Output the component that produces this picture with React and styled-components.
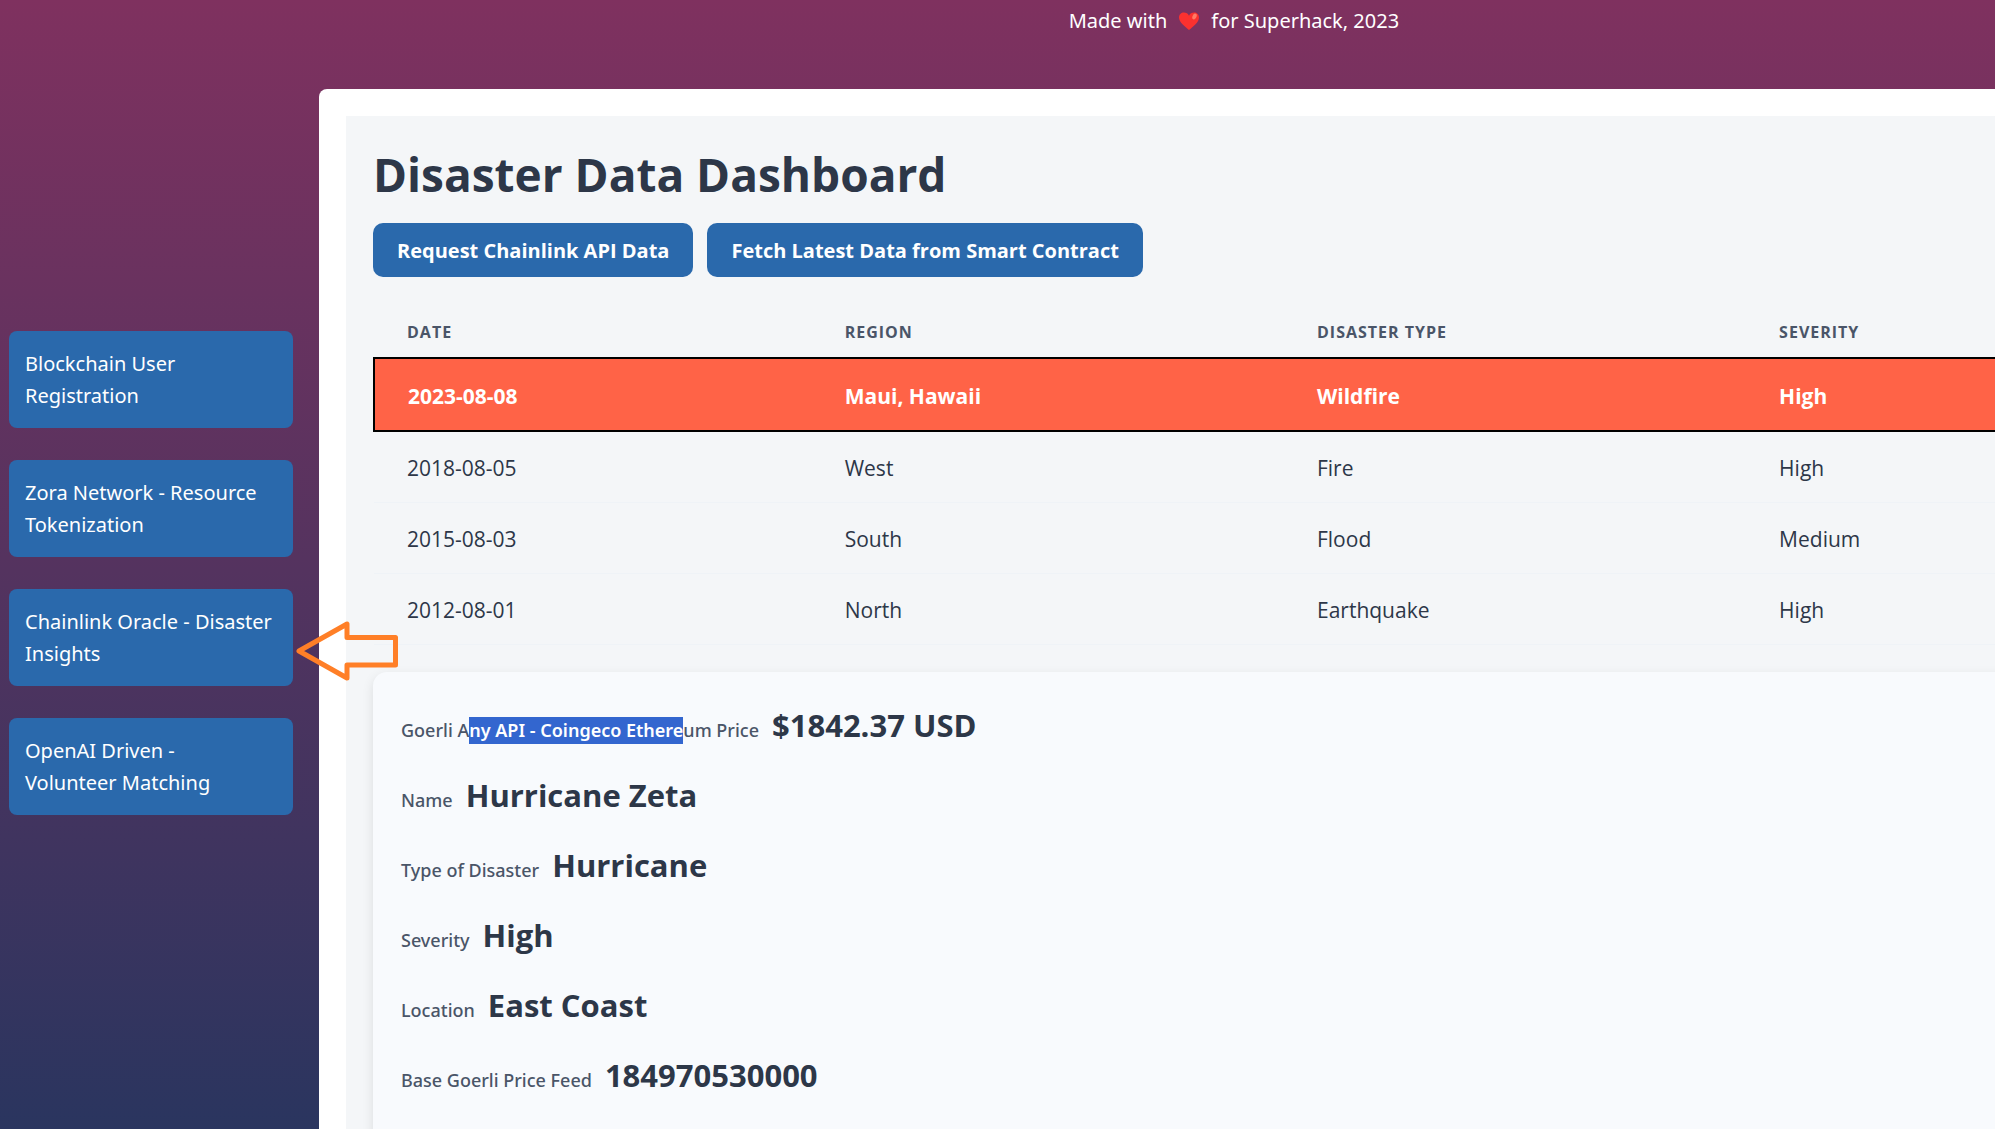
import React from 'react';
import styled, { createGlobalStyle } from 'styled-components';

const GlobalStyle = createGlobalStyle`
  * {
    box-sizing: border-box;
  }
  body {
    margin: 0;
    font-family: 'Noto Sans', 'Open Sans', sans-serif;
    font-size: 20px;
    line-height: 32px;
    color: #2d3748;
  }
`
const Screen = styled.div`
  height: 100vh;
  overflow: hidden;
  background: linear-gradient(#7f315f, #2a355f);
`
const Page = styled.div`
  position: relative;
  width: 124%;
`
const Header = styled.header`
  display: flex;
  justify-content: center;
  align-items: center;
  gap: 11px;
  height: 89px;
  padding: 0 6px 48px 0;
  color: #ffffff;
`
const Layout = styled.div`
  display: flex;
  align-items: flex-start;
  gap: 26px;
  padding: 0 9px;
`
const Sidebar = styled.nav`
  display: flex;
  flex-direction: column;
  flex-shrink: 0;
  gap: 32px;
  width: 284px;
  padding-top: 242px;
`
const MenuLink = styled.a`
  padding: 17px 16px 16px;
  border-radius: 8px;
  background: #2a69ac;
  color: #ffffff;
  text-decoration: none;
`
const Main = styled.main`
  flex: 1;
  padding: 27px;
  border-radius: 8px;
  background: #ffffff;
`
const Panel = styled.section`
  padding: 27px;
  background: #f4f6f8;
`
const Title = styled.h1`
  margin: 0 0 18px;
  font-family: 'Open Sans', sans-serif;
  font-size: 46px;
  line-height: 62px;
  font-weight: 700;
`
const Actions = styled.div`
  display: flex;
  gap: 14px;
  margin-bottom: 27px;
`
const Button = styled.button`
  height: 54px;
  padding: 0 24px;
  border: 0;
  border-radius: 10px;
  background: #2a69ac;
  color: #ffffff;
  font-family: 'Open Sans', sans-serif;
  font-size: 20px;
  font-weight: 700;
`
const Table = styled.table`
  width: 100%;
  table-layout: fixed;
  border-collapse: collapse;
  text-align: left;
  font-family: 'Open Sans', sans-serif;
  font-size: 21px;
`
const Th = styled.th`
  width: ${(props) => props.$width};
  height: 54px;
  padding: 2px 33px 0;
  font-size: 16px;
  font-weight: 700;
  letter-spacing: 1px;
  text-transform: uppercase;
  color: #4a5568;
`
const Row = styled.tr`
  ${(props) => props.$alert && `
    border: 2px solid #000000;
    background: #ff6347;
    color: #ffffff;
    font-weight: 700;
  `}
`
const Td = styled.td`
  height: ${(props) => (props.$alert ? '73px' : '71px')};
  padding: 2px 33px 0;
  border-bottom: ${(props) => (props.$alert ? '2px solid #000000' : '1px solid #eff3f7')};
`
const Details = styled.dl`
  margin: 27px 0 0;
  padding: 29px 28px 27px;
  border-radius: 14px;
  background: #f8fafd;
  box-shadow: 0 4px 12px rgba(0, 0, 0, 0.1);
`
const Detail = styled.div`
  display: flex;
  align-items: baseline;
  gap: 13px;
  height: 70px;
`
const Label = styled.dt`
  font-size: 18px;
  font-weight: 500;
  color: #4a5568;
`
const Value = styled.dd`
  margin: 0;
  font-family: 'Open Sans', sans-serif;
  font-size: 31px;
  line-height: 48px;
  font-weight: 700;
`
const Selected = styled.mark`
  padding: 1px 0 2px;
  background: #3366cf;
  color: #ffffff;
  font-weight: 600;
`
const Arrow = styled.svg`
  position: absolute;
  left: 294px;
  top: 619px;
  width: 106px;
  height: 64px;
`

const links = [
  'Blockchain User Registration',
  'Zora Network - Resource Tokenization',
  'Chainlink Oracle - Disaster Insights',
  'OpenAI Driven - Volunteer\u00a0Matching',
]

const disasters = [
  { date: '2023-08-08', region: 'Maui, Hawaii', type: 'Wildfire', severity: 'High', alert: true },
  { date: '2018-08-05', region: 'West', type: 'Fire', severity: 'High' },
  { date: '2015-08-03', region: 'South', type: 'Flood', severity: 'Medium' },
  { date: '2012-08-01', region: 'North', type: 'Earthquake', severity: 'High' },
]

const details = [
  { label: 'Name', value: 'Hurricane Zeta' },
  { label: 'Type of Disaster', value: 'Hurricane' },
  { label: 'Severity', value: 'High' },
  { label: 'Location', value: 'East Coast' },
  { label: 'Base Goerli Price Feed', value: '184970530000' },
]

const Heart = () => (
  <svg width="22" height="20" viewBox="0 0 22 20" role="img" aria-label="love">
    <path
      d="M11 19C7 15.500 1 11.500 1 6.500C1 3.500 3.200 1.500 5.900 1.500C8.200 1.500 10 2.700 11 4.700C12 2.700 13.800 1.500 16.100 1.500C18.800 1.500 21 3.500 21 6.500C21 11.500 15 15.500 11 19Z"
      fill="#fb312f"
    />
    <ellipse cx="16.500" cy="5.500" rx="2" ry="3" transform="rotate(25 16.500 5.500)" fill="#ff7b66" />
  </svg>
)

class App extends React.Component {
  render() {
    return (
      <Screen>
        <GlobalStyle />
        <Page>
          <Header>
            <span>Made with</span>
            <Heart />
            <span>for Superhack, 2023</span>
          </Header>
          <Layout>
            <Sidebar>
              {links.map((link) => (
                <MenuLink href="#" key={link}>{link}</MenuLink>
              ))}
            </Sidebar>
            <Main>
              <Panel>
                <Title>Disaster Data Dashboard</Title>
                <Actions>
                  <Button type="button">Request Chainlink API Data</Button>
                  <Button type="button">Fetch Latest Data from Smart Contract</Button>
                </Actions>
                <Table>
                  <thead>
                    <tr>
                      <Th $width="21.5%">Date</Th>
                      <Th $width="23.2%">Region</Th>
                      <Th $width="22.7%">Disaster Type</Th>
                      <Th>Severity</Th>
                    </tr>
                  </thead>
                  <tbody>
                    {disasters.map((item) => (
                      <Row key={item.date} $alert={item.alert}>
                        <Td $alert={item.alert}>{item.date}</Td>
                        <Td $alert={item.alert}>{item.region}</Td>
                        <Td $alert={item.alert}>{item.type}</Td>
                        <Td $alert={item.alert}>{item.severity}</Td>
                      </Row>
                    ))}
                  </tbody>
                </Table>
                <Details>
                  <Detail>
                    <Label>Goerli A<Selected>ny API - Coingeco Ethere</Selected>um Price</Label>
                    <Value>$1842.37 USD</Value>
                  </Detail>
                  {details.map((item) => (
                    <Detail key={item.label}>
                      <Label>{item.label}</Label>
                      <Value>{item.value}</Value>
                    </Detail>
                  ))}
                </Details>
              </Panel>
            </Main>
          </Layout>
          <Arrow viewBox="0 0 106 64" aria-hidden="true">
            <path
              d="M5 32L53 5V18.500H101.500V46H53V59Z"
              fill="none"
              stroke="#ff7f27"
              strokeWidth="5"
              strokeLinejoin="round"
            />
          </Arrow>
        </Page>
      </Screen>
    )
  }
}

export default App;
